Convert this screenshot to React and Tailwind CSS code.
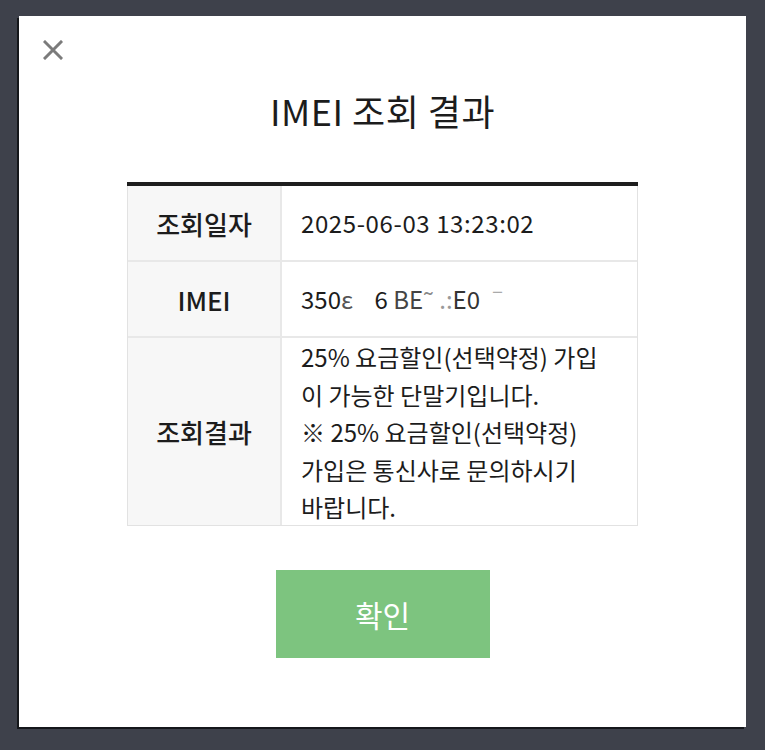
import React from "react";

export default function App() {
  const font = "font-['Noto_Sans_CJK_KR','Noto_Sans',sans-serif]";
  return (
    <div className={`w-[765px] h-[750px] bg-[#3e414b] pt-[16px] pl-[19px] overflow-hidden ${font}`}>
      <div className="w-[727px] h-[711px] bg-white flex flex-col shadow-[-2px_2px_0_#15171b]">
        <div className="pt-[24px] pl-[24px]">
          <svg width="20" height="20" viewBox="0 0 20 20">
            <path d="M2 2 L18 18 M18 2 L2 18" stroke="#7b7b7b" strokeWidth="3" strokeLinecap="square" />
          </svg>
        </div>
        <h1 className="mt-[26px] text-center text-[36px] leading-[48px] text-[#1c1c1c] font-normal tracking-[0.5px]">
          IMEI 조회 결과
        </h1>
        <div className="mt-[48px] mx-auto w-[511px] border-t-4 border-t-[#1e1e1e]">
          <div className="grid grid-cols-[154px_1fr] border-l border-r border-b border-[#e2e2e2] text-[24px] text-[#1c1c1c]">
            <div className="h-[76px] bg-[#f7f7f7] border-r-2 border-b-2 border-[#e8e8e8] flex items-center justify-center font-medium text-[26px]">조회일자</div>
            <div className="h-[76px] border-b-2 border-[#e8e8e8] flex items-center pl-[19px] tracking-[0.6px]">2025-06-03 13:23:02</div>
            <div className="h-[76px] bg-[#f7f7f7] border-r-2 border-b-2 border-[#e8e8e8] flex items-center justify-center font-medium text-[26px]">IMEI</div>
            <div className="h-[76px] border-b-2 border-[#e8e8e8] flex items-center pl-[19px] whitespace-pre">
              <span>350</span><span className="text-[#555]">ε</span><span>{"    6 "}</span><span className="text-[#444]">BE</span><span className="text-[#888]">{"˜ "}</span><span className="text-[#999]">.:</span><span className="text-[#333]">E0</span><span className="text-[#aaa]">{" ˉ"}</span>
            </div>
            <div className="h-[187px] bg-[#f7f7f7] border-r-2 border-[#e8e8e8] flex items-center justify-center font-medium text-[26px]">조회결과</div>
            <div className="h-[187px] pl-[19px] pr-[10px] leading-[37.5px]">
              25% 요금할인(선택약정) 가입
              <br />이 가능한 단말기입니다.
              <br />※ 25% 요금할인(선택약정)
              <br />가입은 통신사로 문의하시기
              <br />바랍니다.
            </div>
          </div>
        </div>
        <div className="mt-[44px] flex justify-center">
          <button className="w-[214px] h-[88px] bg-[#7dc47f] text-white text-[30px] flex items-center justify-center">
            확인
          </button>
        </div>
      </div>
    </div>
  );
}
